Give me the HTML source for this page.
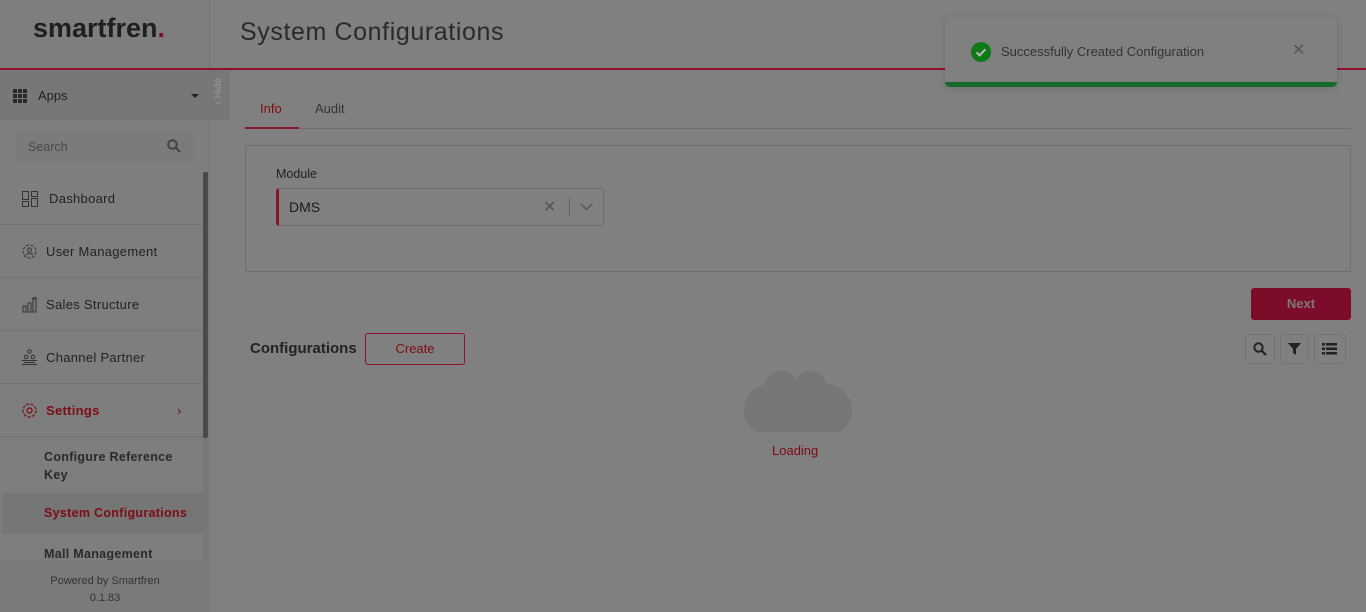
<!DOCTYPE html>
<html><head><meta charset="utf-8"><style>
*{box-sizing:border-box;margin:0;padding:0}
body{width:1366px;height:612px;overflow:hidden;background:#808080;font-family:"Liberation Sans",sans-serif;color:#1c1c1c;position:relative}
.abs{position:absolute}
.side{left:0;top:0;width:210px;height:612px;background:#7e7e7e;border-right:1px solid #777}
.logo{left:33px;top:13px;font-size:27px;font-weight:bold;color:#1f1f1f;letter-spacing:0px}
.item{left:0;width:203px;height:53px;border-bottom:1px solid #737373;font-size:13px;color:#222;display:flex;align-items:center;padding-left:46px;letter-spacing:0.3px}
.sub{left:44px;font-size:12.5px;font-weight:bold;color:#2a2a2a;letter-spacing:0.3px}
</style></head><body>
<div class="abs side"></div>
<div class="abs" style="left:209px;top:0;width:1px;height:68px;background:#747474"></div>
<div class="abs logo">smartfren<span style="color:#7d0c2b">.</span></div>
<div class="abs" style="left:240px;top:18px;font-size:25px;color:#2a2a2a;letter-spacing:0.6px">System Configurations</div>
<div class="abs" style="left:0;top:68px;width:1366px;height:2px;background:#8c1228"></div>
<div class="abs" style="left:0;top:70px;width:230px;height:50px;background:#777"></div>
<svg class="abs" style="left:13px;top:89px" width="14" height="14"><g fill="#2a2a2a"><rect x="0" y="0" width="4" height="4"/><rect x="5" y="0" width="4" height="4"/><rect x="10" y="0" width="4" height="4"/><rect x="0" y="5" width="4" height="4"/><rect x="5" y="5" width="4" height="4"/><rect x="10" y="5" width="4" height="4"/><rect x="0" y="10" width="4" height="4"/><rect x="5" y="10" width="4" height="4"/><rect x="10" y="10" width="4" height="4"/></g></svg>
<div class="abs" style="left:38px;top:88px;font-size:13px;color:#222">Apps</div>
<div class="abs" style="left:191px;top:94px;border-left:4px solid transparent;border-right:4px solid transparent;border-top:4px solid #222"></div>
<div class="abs" style="left:213px;top:78px;font-size:10px;color:#999;writing-mode:vertical-rl;transform:rotate(180deg)">‹ Hide</div>
<div class="abs" style="left:16px;top:131px;width:178px;height:31px;background:#7b7b7b"></div>
<div class="abs" style="left:28px;top:140px;font-size:12.5px;color:#4a4a4a">Search</div>
<svg class="abs" style="left:167px;top:139px" width="14" height="14"><circle cx="5.5" cy="5.5" r="4.3" fill="none" stroke="#444" stroke-width="2"/><line x1="8.5" y1="8.5" x2="13" y2="13" stroke="#444" stroke-width="2.2"/></svg>
<div class="abs item" style="top:172px;padding-left:49px">Dashboard</div>
<svg class="abs" style="left:22px;top:191px" width="16" height="16" fill="none" stroke="#333" stroke-width="1"><rect x=".5" y=".5" width="6" height="8"/><rect x="9.5" y=".5" width="6" height="5"/><rect x=".5" y="10.5" width="6" height="5"/><rect x="9.5" y="7.5" width="6" height="8"/></svg>
<div class="abs item" style="top:225px">User Management</div>
<svg class="abs" style="left:21px;top:243px" width="17" height="17" fill="none" stroke="#333"><circle cx="8.5" cy="8.5" r="6.5" stroke-dasharray="3 1.5"/><circle cx="8.5" cy="7" r="2"/><path d="M5 12c1-2 6-2 7 0"/></svg>
<div class="abs item" style="top:278px">Sales Structure</div>
<svg class="abs" style="left:22px;top:296px" width="16" height="17" fill="none" stroke="#333"><rect x="1" y="10" width="3" height="6"/><rect x="6" y="7" width="3" height="9"/><rect x="11" y="3" width="3" height="13"/><path d="M10 3l2.5-2 2.5 2"/></svg>
<div class="abs item" style="top:331px">Channel Partner</div>
<svg class="abs" style="left:21px;top:349px" width="17" height="17" fill="none" stroke="#333"><circle cx="8.5" cy="2.5" r="1.8"/><circle cx="5" cy="8" r="1.8"/><circle cx="12" cy="8" r="1.8"/><path d="M1 11.5h15M1 15.5h15M3 13.5h11"/></svg>
<div class="abs item" style="top:384px;color:#7d0c14;font-weight:bold">Settings<span style="position:absolute;left:177px;font-weight:normal;font-size:13px">›</span></div>
<svg class="abs" style="left:21px;top:402px" width="17" height="17" fill="none" stroke="#7d0c14" stroke-width="1.2"><circle cx="8.5" cy="8.5" r="6.5" stroke-dasharray="3 1.5"/><circle cx="8.5" cy="8.5" r="2.5"/></svg>
<div class="abs sub" style="top:448px;line-height:18px;width:135px">Configure Reference Key</div>
<div class="abs" style="left:2px;top:493px;width:201px;height:41px;background:#767676"></div>
<div class="abs sub" style="top:506px;color:#7d0c14">System Configurations</div>
<div class="abs sub" style="top:547px">Mall Management</div>
<div class="abs" style="left:203px;top:172px;width:5px;height:388px;background:#777"></div>
<div class="abs" style="left:203px;top:172px;width:5px;height:266px;background:#4a4a4a;border-radius:2px"></div>
<div class="abs" style="left:0;top:560px;width:210px;height:52px;background:#7a7a7a;text-align:center;font-size:11px;color:#333;padding-top:13px;line-height:17px">Powered by Smartfren<br>0.1.83</div>
<div class="abs" style="left:260px;top:101px;font-size:13px;color:#7d0c14">Info</div>
<div class="abs" style="left:315px;top:101px;font-size:13px;color:#333">Audit</div>
<div class="abs" style="left:245px;top:128px;width:1106px;height:1px;background:#6e6e6e"></div>
<div class="abs" style="left:245px;top:127px;width:54px;height:2px;background:#8c1228"></div>
<div class="abs" style="left:245px;top:145px;width:1106px;height:127px;border:1px solid #6e6e6e"></div>
<div class="abs" style="left:276px;top:167px;font-size:12.5px;color:#1f1f1f">Module</div>
<div class="abs" style="left:276px;top:188px;width:328px;height:38px;border:1px solid #6a6a6a;border-left:3px solid #8c1228;border-radius:3px"></div>
<div class="abs" style="left:289px;top:199px;font-size:14px;color:#1a1a1a">DMS</div>
<div class="abs" style="left:543px;top:197px;font-size:16px;color:#555">✕</div>
<div class="abs" style="left:569px;top:197px;width:1px;height:20px;background:#666"></div>
<svg class="abs" style="left:580px;top:203px" width="13" height="8"><path d="M1 1l5.5 5.5L12 1" fill="none" stroke="#555" stroke-width="1.5"/></svg>
<div class="abs" style="left:1251px;top:288px;width:100px;height:32px;background:#7d0c2b;border-radius:3px;color:#7a7a7a;font-weight:bold;font-size:13px;text-align:center;line-height:32px">Next</div>
<div class="abs" style="left:250px;top:340px;font-size:15px;font-weight:bold;color:#222">Configurations</div>
<div class="abs" style="left:365px;top:333px;width:100px;height:32px;border:1px solid #8c1228;border-radius:3px;color:#7d0c14;font-size:13px;text-align:center;line-height:30px">Create</div>
<div class="abs" style="left:1245px;top:334px;width:30px;height:30px;border:1px solid #747474;border-radius:3px"></div>
<svg class="abs" style="left:1253px;top:342px" width="14" height="14"><circle cx="5.5" cy="5.5" r="4.2" fill="none" stroke="#222" stroke-width="2"/><line x1="8.5" y1="8.5" x2="13" y2="13" stroke="#222" stroke-width="2.2"/></svg>
<div class="abs" style="left:1280px;top:334px;width:29px;height:30px;border:1px solid #747474;border-radius:3px"></div>
<svg class="abs" style="left:1288px;top:342px" width="13" height="13"><path d="M0 1h13L8 7v6L5 11V7z" fill="#222"/></svg>
<div class="abs" style="left:1314px;top:334px;width:32px;height:30px;border:1px solid #747474;border-radius:3px"></div>
<svg class="abs" style="left:1322px;top:342px" width="15" height="13" fill="#222"><rect x="0" y="1" width="3" height="2.5"/><rect x="4" y="1" width="11" height="2.5"/><rect x="0" y="5.5" width="3" height="2.5"/><rect x="4" y="5.5" width="11" height="2.5"/><rect x="0" y="10" width="3" height="2.5"/><rect x="4" y="10" width="11" height="2.5"/></svg>
<svg class="abs" style="left:743px;top:370px" width="110" height="62"><g fill="#767676"><circle cx="38" cy="18" r="17"/><circle cx="67" cy="18" r="17"/><circle cx="27" cy="40" r="26"/><circle cx="83" cy="40" r="26"/><rect x="27" y="18" width="56" height="44"/></g></svg>
<div class="abs" style="left:772px;top:443px;font-size:13px;color:#7d0c14">Loading</div>
<div class="abs" style="left:945px;top:17px;width:392px;height:70px;background:#808080;border-radius:5px;box-shadow:0 1px 8px rgba(0,0,0,.15);overflow:hidden">
<div class="abs" style="left:0;bottom:0;width:392px;height:5px;background:#166a2c"></div>
</div>
<svg class="abs" style="left:971px;top:42px" width="20" height="20"><circle cx="10" cy="10" r="10" fill="#0e7a17"/><path d="M5.5 10.3l3 3 6-6" fill="none" stroke="#bbb" stroke-width="2"/></svg>
<div class="abs" style="left:1001px;top:44px;font-size:13px;color:#333">Successfully Created Configuration</div>
<div class="abs" style="left:1292px;top:40px;font-size:16px;color:#555">✕</div>
</body></html>
